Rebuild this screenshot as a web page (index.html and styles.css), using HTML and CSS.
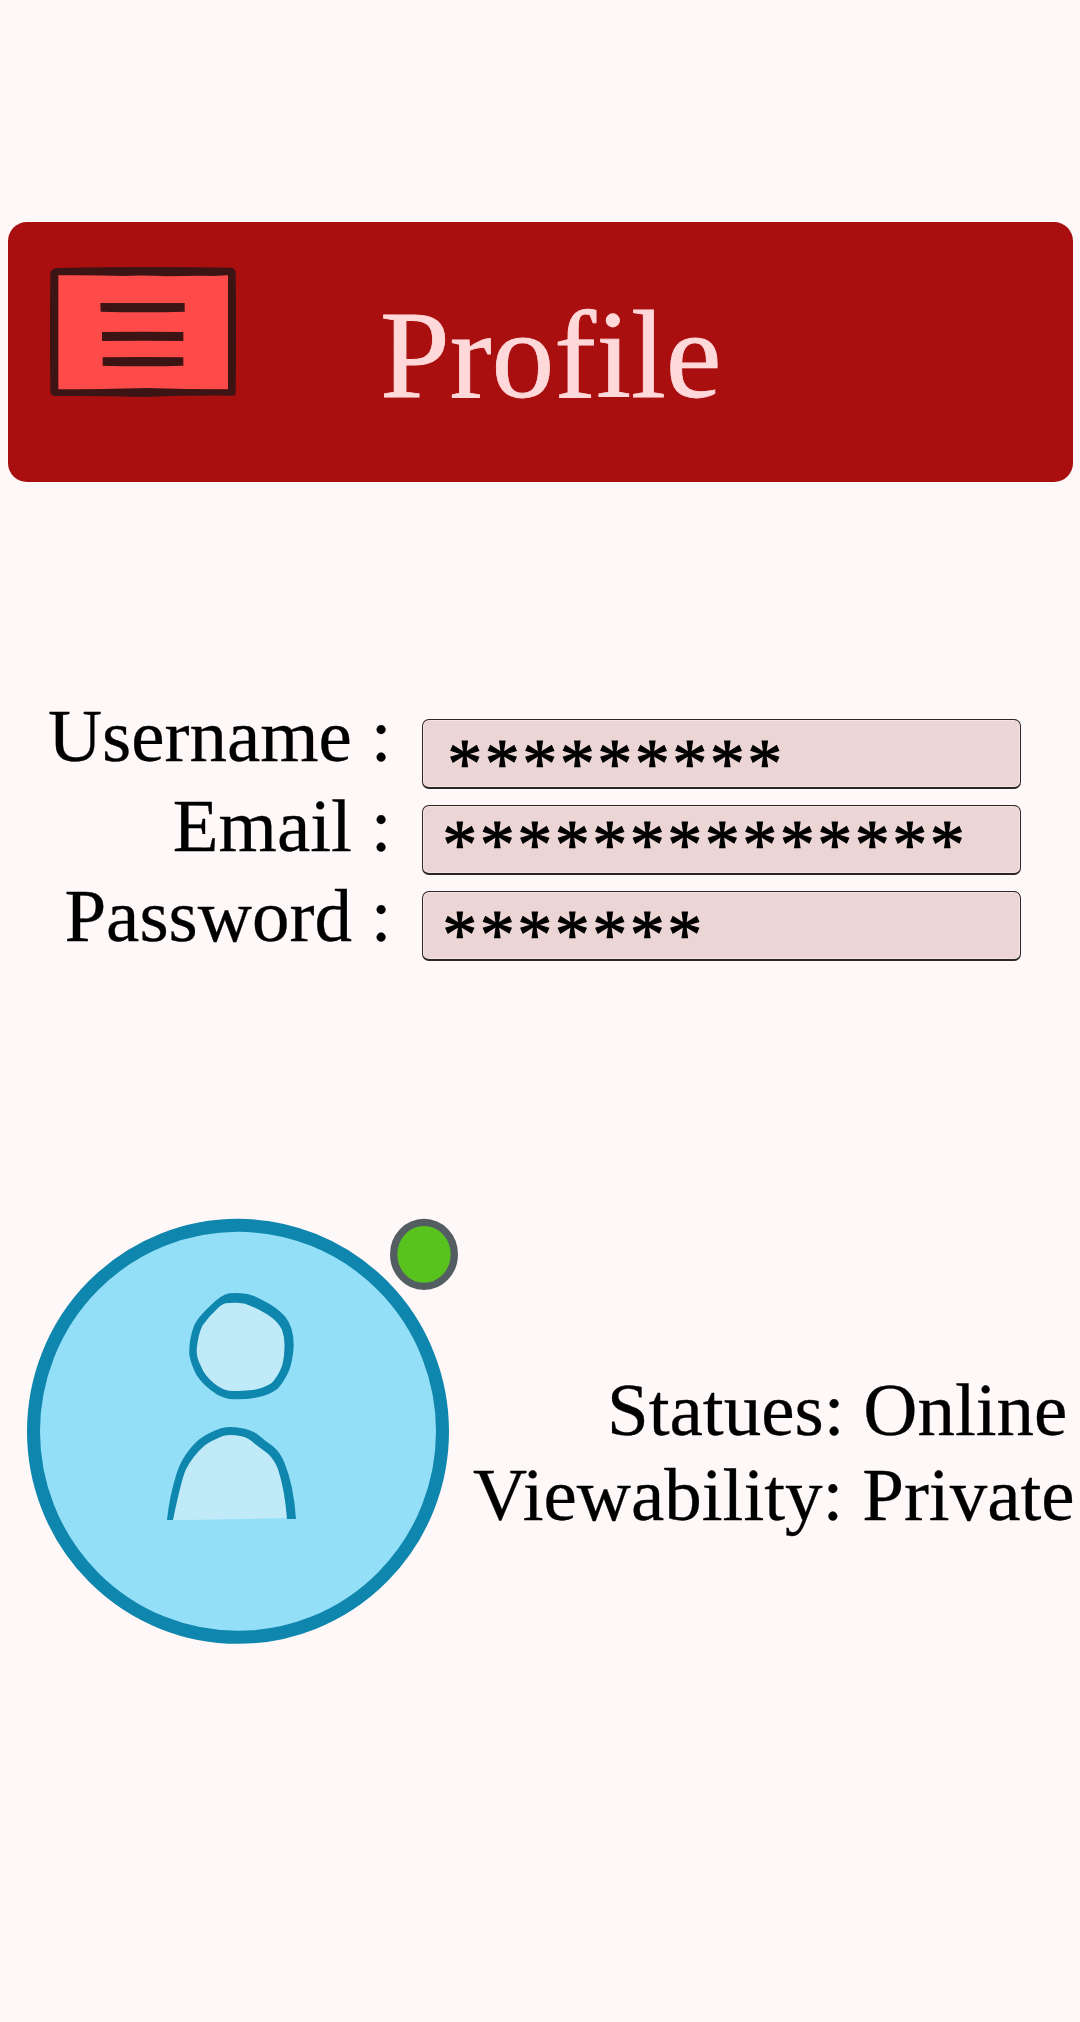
FILE: index.html
```html
<!DOCTYPE html>
<html lang="en">
<head>
<meta charset="utf-8">
<title>Profile</title>
<link rel="stylesheet" href="styles.css">
</head>
<body>
<main class="page">
  <header class="header">
    <button class="menu" aria-label="Menu">
      <svg class="menu-icon" viewBox="150 171 558 390" aria-hidden="true">
        <path fill="#3c1414" d="M168 174Q430 169 692 173Q707 174 707 190Q709 365 707 548Q707 557 698 557Q560 556 440 561Q300 557 165 558Q152 558 151 545Q149 360 151 190Q154 177 168 174Z"/>
        <path fill="#ff4a4a" d="M175 196Q280 195 370 198Q430 195 500 199Q590 196 640 198L684 196V538Q560 538 440 534Q300 538 175 538Z"/>
        <path fill="#3c1414" d="M301 279H554V305Q430 309 302 305ZM306 366Q430 364 550 366V393Q430 391 306 393ZM308 442Q430 440 550 442V467Q430 470 308 467Z"/>
      </svg>
    </button>
    <h1 class="title">Profile</h1>
  </header>

  <section class="account">
    <div class="labels">
      <div class="label">Username :</div>
      <div class="label">Email :</div>
      <div class="label">Password :</div>
    </div>
    <div class="fields">
      <div class="field field-username">*********</div>
      <div class="field field-email">**************</div>
      <div class="field field-password">*******</div>
    </div>
  </section>

  <section class="presence">
    <svg class="avatar" viewBox="0 0 1440 1380" role="img" aria-label="Avatar, online">
      <ellipse cx="714" cy="694" rx="613.500" ry="618" fill="#94dff8" stroke="#0f86ae" stroke-width="39"/>
      <path fill="#0f86ae" d="M688 280Q712 278 742 282Q764 287 785 299Q832 322 856 350Q882 382 881 440Q878 488 864 519Q849 549 833 566Q807 585 777 591Q738 600 688 597Q659 592 637 574Q607 552 590 526Q573 494 568 465Q566 418 583 375Q594 352 627 321Q664 283 688 280Z"/>
      <path fill="#c0eaf8" d="M676 310Q708 306 735 311Q766 322 801 343Q833 363 846 389Q856 417 853 450Q852 487 841 510Q829 535 815 549Q785 569 746 571Q716 574 687 572Q662 567 640 548Q613 526 603 499Q589 473 590 448Q594 405 607 377Q625 351 648 330Q663 314 676 310Z"/>
      <path fill="#c0eaf8" d="M510 961Q529 855 551 808C574 755 618 715 660 700Q690 690 735 703C765 710 783 735 806 749C848 778 871 870 875 954Z"/>
      <path fill="#0f86ae" d="M501 960Q508 890 530 820C541 782 569 742 596 719Q622 700 662 685Q692 678 721 684Q755 688 776 706Q799 726 818 738Q841 756 854 790Q881 856 888 957H861Q854 868 834 808Q824 780 804 761L765 732Q746 713 721 708Q690 702 669 708Q633 722 613 737Q577 769 558 808Q545 835 519 960Z"/>
      <ellipse cx="1272" cy="163" rx="91" ry="96" fill="#58c21e" stroke="#535e62" stroke-width="22"/>
    </svg>
    <div class="status">
      <div class="status-line status-online">Statues: Online</div>
      <div class="status-line">Viewability: Private</div>
    </div>
  </section>
</main>
</body>
</html>
```
FILE: styles.css
```css
* {
  box-sizing: border-box;
}

body {
  margin: 0;
  background: #fff8f8;
  color: #000;
  font-family: "Liberation Serif", "Times New Roman", serif;
}

.page {
  display: flex;
  flex-direction: column;
  width: 1080px;
  height: 2022px;
  padding-top: 222px;
  overflow: hidden;
}

.header {
  display: flex;
  align-items: flex-start;
  width: 1065px;
  height: 260px;
  margin-left: 8px;
  padding: 45px 0 0 42px;
  border-radius: 19px;
  background: #aa0f0f;
}

.menu {
  display: block;
  padding: 0;
  border: 0;
  background: none;
}

.menu-icon {
  display: block;
  width: 186px;
  height: 130px;
}

.title {
  margin: 19px 0 0 144px;
  color: #ffd9da;
  font-size: 125.5px;
  font-weight: 400;
  line-height: 138px;
  font-variant-ligatures: none;
  -webkit-text-stroke: 0.8px #ffd9da;
}

.account {
  display: flex;
  height: 270px;
  margin-top: 209px;
}

.labels {
  width: 391.5px;
  text-align: right;
}

.label {
  font-size: 75px;
  line-height: 90px;
  white-space: nowrap;
  -webkit-text-stroke: 0.3px #000;
}

.fields {
  display: flex;
  flex-direction: column;
  gap: 16px;
  margin: 28px 0 0 30.5px;
}

.field {
  width: 599px;
  height: 70px;
  border: 1px solid #2c2627;
  border-bottom-width: 2px;
  border-radius: 7px;
  background: #ebd6d5;
  box-shadow: inset 0 0 0 1px #f8e3e3;
  font-size: 69px;
  letter-spacing: 3px;
  line-height: 70px;
  -webkit-text-stroke: 1.2px #000;
}

.field-username {
  padding: 9px 0 0 24.5px;
}

.field-email {
  padding: 4px 0 0 19.5px;
}

.field-password {
  padding: 8px 0 0 19.5px;
}

.presence {
  display: flex;
  margin-top: 239px;
}

.avatar {
  flex: none;
  width: 480px;
  height: 460px;
  margin-right: -7px;
}

.status {
  padding-top: 167px;
}

.status-line {
  font-size: 75px;
  line-height: 85px;
  white-space: nowrap;
  -webkit-text-stroke: 0.3px #000;
}

.status-online {
  padding-left: 134px;
}
```
